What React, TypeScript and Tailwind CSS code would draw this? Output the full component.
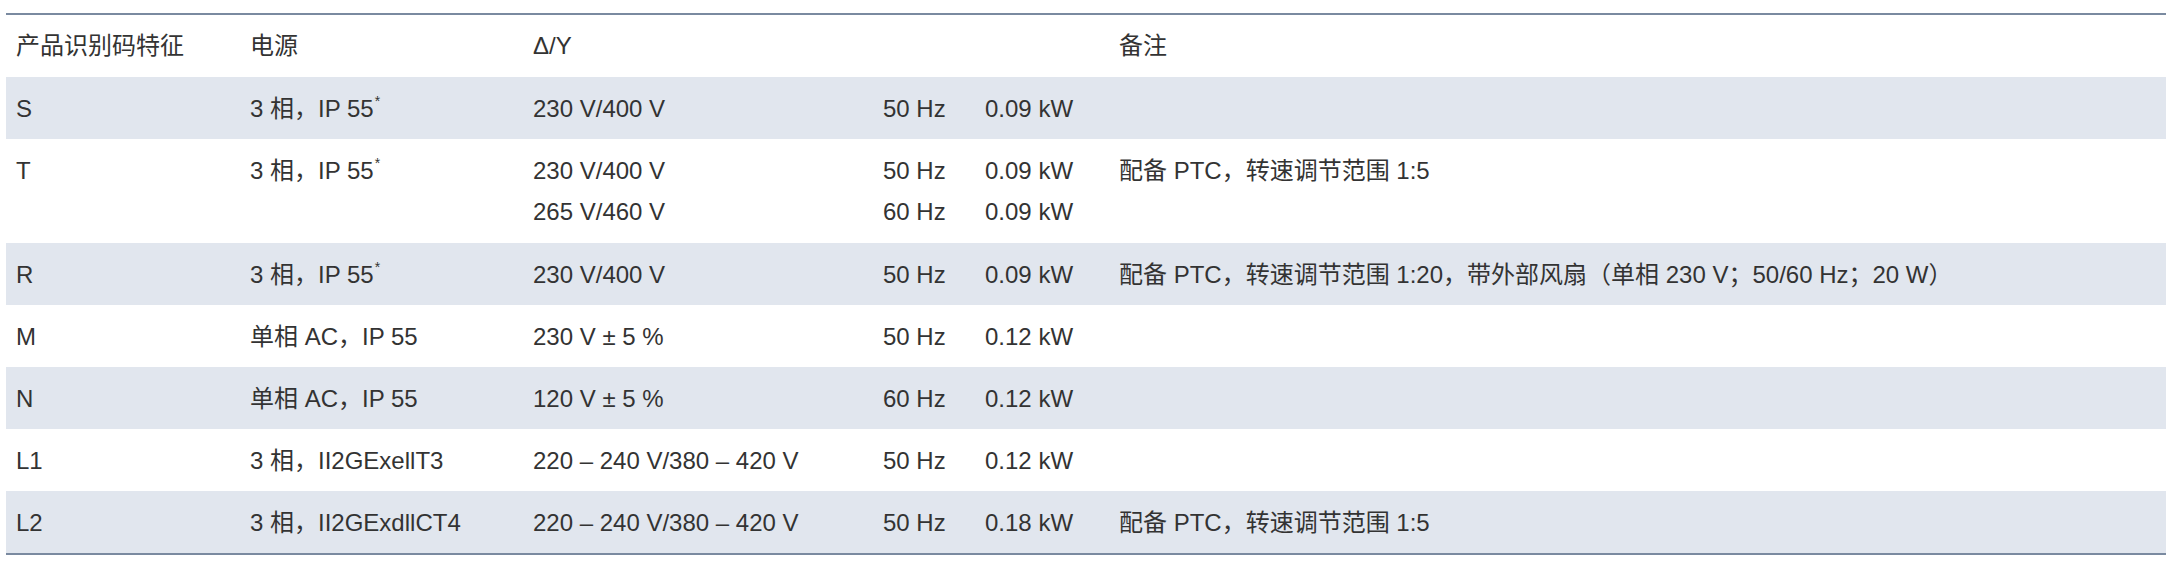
import React from 'react'

type Row = {
  code: string
  power: React.ReactNode
  voltage: string[]
  freq: string[]
  output: string[]
  note?: string
}

const Star = () => <sup className="relative -top-[11px] ml-px text-[14px] leading-none">*</sup>

const ROWS: Row[] = [
  { code: 'S', power: <>3 相，IP 55<Star /></>, voltage: ['230 V/400 V'], freq: ['50 Hz'], output: ['0.09 kW'] },
  {
    code: 'T',
    power: <>3 相，IP 55<Star /></>,
    voltage: ['230 V/400 V', '265 V/460 V'],
    freq: ['50 Hz', '60 Hz'],
    output: ['0.09 kW', '0.09 kW'],
    note: '配备 PTC，转速调节范围 1:5',
  },
  {
    code: 'R',
    power: <>3 相，IP 55<Star /></>,
    voltage: ['230 V/400 V'],
    freq: ['50 Hz'],
    output: ['0.09 kW'],
    note: '配备 PTC，转速调节范围 1:20，带外部风扇（单相 230 V；50/60 Hz；20 W）',
  },
  { code: 'M', power: '单相 AC，IP 55', voltage: ['230 V ± 5 %'], freq: ['50 Hz'], output: ['0.12 kW'] },
  { code: 'N', power: '单相 AC，IP 55', voltage: ['120 V ± 5 %'], freq: ['60 Hz'], output: ['0.12 kW'] },
  { code: 'L1', power: '3 相，II2GExellT3', voltage: ['220 – 240 V/380 – 420 V'], freq: ['50 Hz'], output: ['0.12 kW'] },
  {
    code: 'L2',
    power: '3 相，II2GExdllCT4',
    voltage: ['220 – 240 V/380 – 420 V'],
    freq: ['50 Hz'],
    output: ['0.18 kW'],
    note: '配备 PTC，转速调节范围 1:5',
  },
]

const gridCols = 'grid grid-cols-[244px_283px_350px_102px_134px_1fr]'

function Lines({ items }: { items: string[] }) {
  return (
    <div>
      {items.map((item, i) => (
        <div key={i}>{item}</div>
      ))}
    </div>
  )
}

export default function App() {
  return (
    <div
      className="bg-white pt-[13px] pl-[6px] text-[24px] leading-[41px] text-[#333333]"
      style={{ fontFamily: '"Liberation Sans", "Noto Sans CJK SC", Arial, sans-serif' }}
    >
      <div className="w-[2160px] border-y-2 border-[#7a8aa0]">
        {/* Header */}
        <div className={`${gridCols} pt-[10px] pb-[11px]`}>
          <div className="pl-[10px]">产品识别码特征</div>
          <div>电源</div>
          <div>Δ/Y</div>
          <div />
          <div />
          <div>备注</div>
        </div>

        {ROWS.map((row, i) => (
          <div
            key={row.code}
            className={`${gridCols} pt-[11px] ${row.voltage.length > 1 ? 'pb-[11px]' : 'pb-[10px]'} ${i % 2 === 0 ? 'bg-[#e1e6ee]' : 'bg-white'}`}
          >
            <div className="pl-[10px]">{row.code}</div>
            <div>{row.power}</div>
            <Lines items={row.voltage} />
            <Lines items={row.freq} />
            <Lines items={row.output} />
            <div>{row.note}</div>
          </div>
        ))}
      </div>
    </div>
  )
}
